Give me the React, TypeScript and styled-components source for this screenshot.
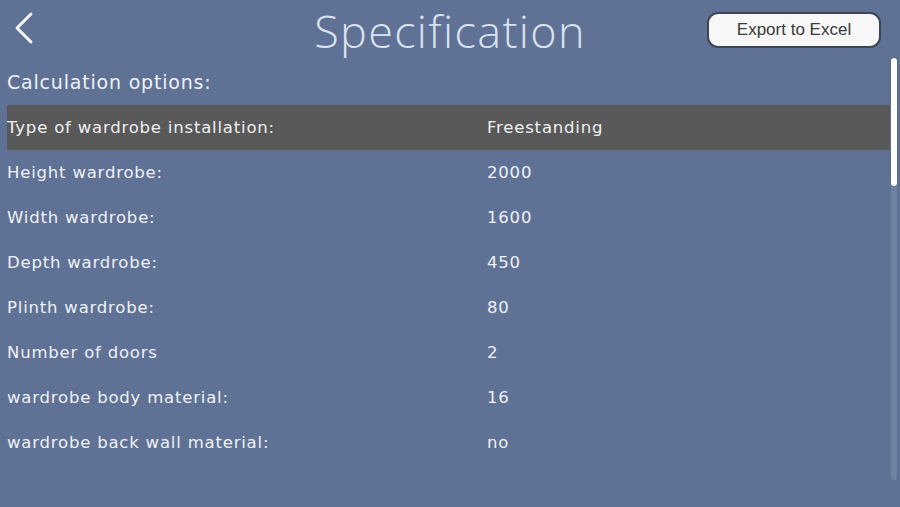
import React from 'react';
import styled, { createGlobalStyle } from 'styled-components';

const GlobalStyle = createGlobalStyle`
  html, body {
    margin: 0;
    padding: 0;
    background: #5f7194;
  }
  * { box-sizing: border-box; }
`;

const Screen = styled.div`
  width: 900px;
  height: 507px;
  background: #5f7194;
  display: flex;
  flex-direction: column;
  overflow: hidden;
  font-family: 'DejaVu Sans', 'Noto Sans', sans-serif;
  color: #eef2f8;
`;

const Header = styled.header`
  display: grid;
  grid-template-columns: 1fr auto 1fr;
  align-items: center;
`;

const BackButton = styled.button`
  justify-self: start;
  margin-left: 12px;
  margin-top: -5px;
  background: none;
  border: none;
  padding: 0;
  display: flex;
  cursor: pointer;
`;

const Title = styled.h1`
  margin: 0;
  font-family: 'Open Sans', 'Noto Sans', sans-serif;
  font-weight: 300;
  font-size: 45px;
  line-height: normal;
  letter-spacing: 1.3px;
  color: #d9e2ef;
`;

const ExportButton = styled.button`
  justify-self: end;
  margin-right: 19px;
  margin-top: -1px;
  width: 174px;
  height: 36px;
  background: #f7f7f7;
  border: 2px solid #3e4552;
  border-radius: 11px;
  font-family: 'Liberation Sans', Arial, sans-serif;
  font-size: 17px;
  color: #3a3a3a;
  cursor: pointer;
`;

const Body = styled.div`
  flex: 1;
  display: flex;
  min-height: 0;
`;

const List = styled.div`
  flex: 1;
  padding-left: 7px;
`;

const SectionTitle = styled.h2`
  margin: 0;
  height: 44px;
  padding-bottom: 2px;
  display: flex;
  align-items: center;
  font-size: 19px;
  font-weight: normal;
  letter-spacing: 0.8px;
  color: #eef2f8;
`;

const Row = styled.div<{ $active?: boolean }>`
  height: 45px;
  display: flex;
  align-items: center;
  background: ${(p) => (p.$active ? '#595959' : 'transparent')};
  font-size: 16.5px;
  letter-spacing: 0.8px;
  color: ${(p) => (p.$active ? '#f0f0f0' : '#eef2f8')};
`;

const Label = styled.span`
  width: 480px;
  flex-shrink: 0;
`;

const Value = styled.span``;

const ScrollTrack = styled.div`
  width: 6px;
  margin: -3px 3px 27px 1px;
  border-radius: 3px;
  background: #7081a0;
  display: flex;
  flex-direction: column;
`;

const ScrollThumb = styled.div`
  height: 128px;
  border-radius: 3px;
  background: #ffffff;
  box-shadow: 0 0 1px rgba(0, 0, 0, 0.4);
`;

const options = [
  { label: 'Type of wardrobe installation:', value: 'Freestanding' },
  { label: 'Height wardrobe:', value: '2000' },
  { label: 'Width wardrobe:', value: '1600' },
  { label: 'Depth wardrobe:', value: '450' },
  { label: 'Plinth wardrobe:', value: '80' },
  { label: 'Number of doors', value: '2' },
  { label: 'wardrobe body material:', value: '16' },
  { label: 'wardrobe back wall material:', value: 'no' },
];

const App: React.FC = () => {
  return (
    <>
      <GlobalStyle />
      <Screen>
        <Header>
          <BackButton aria-label="Back">
            <svg width="24" height="34" viewBox="0 0 24 34">
              <path d="M19 3 L5 17 L19 31" fill="none" stroke="#f4f6fa" strokeWidth="3" strokeLinecap="round" strokeLinejoin="round" />
            </svg>
          </BackButton>
          <Title>Specification</Title>
          <ExportButton>Export to Excel</ExportButton>
        </Header>
        <Body>
          <List>
            <SectionTitle>Calculation options:</SectionTitle>
            {options.map((o, i) => (
              <Row key={o.label} $active={i === 0}>
                <Label>{o.label}</Label>
                <Value>{o.value}</Value>
              </Row>
            ))}
          </List>
          <ScrollTrack>
            <ScrollThumb />
          </ScrollTrack>
        </Body>
      </Screen>
    </>
  );
};

export default App;
